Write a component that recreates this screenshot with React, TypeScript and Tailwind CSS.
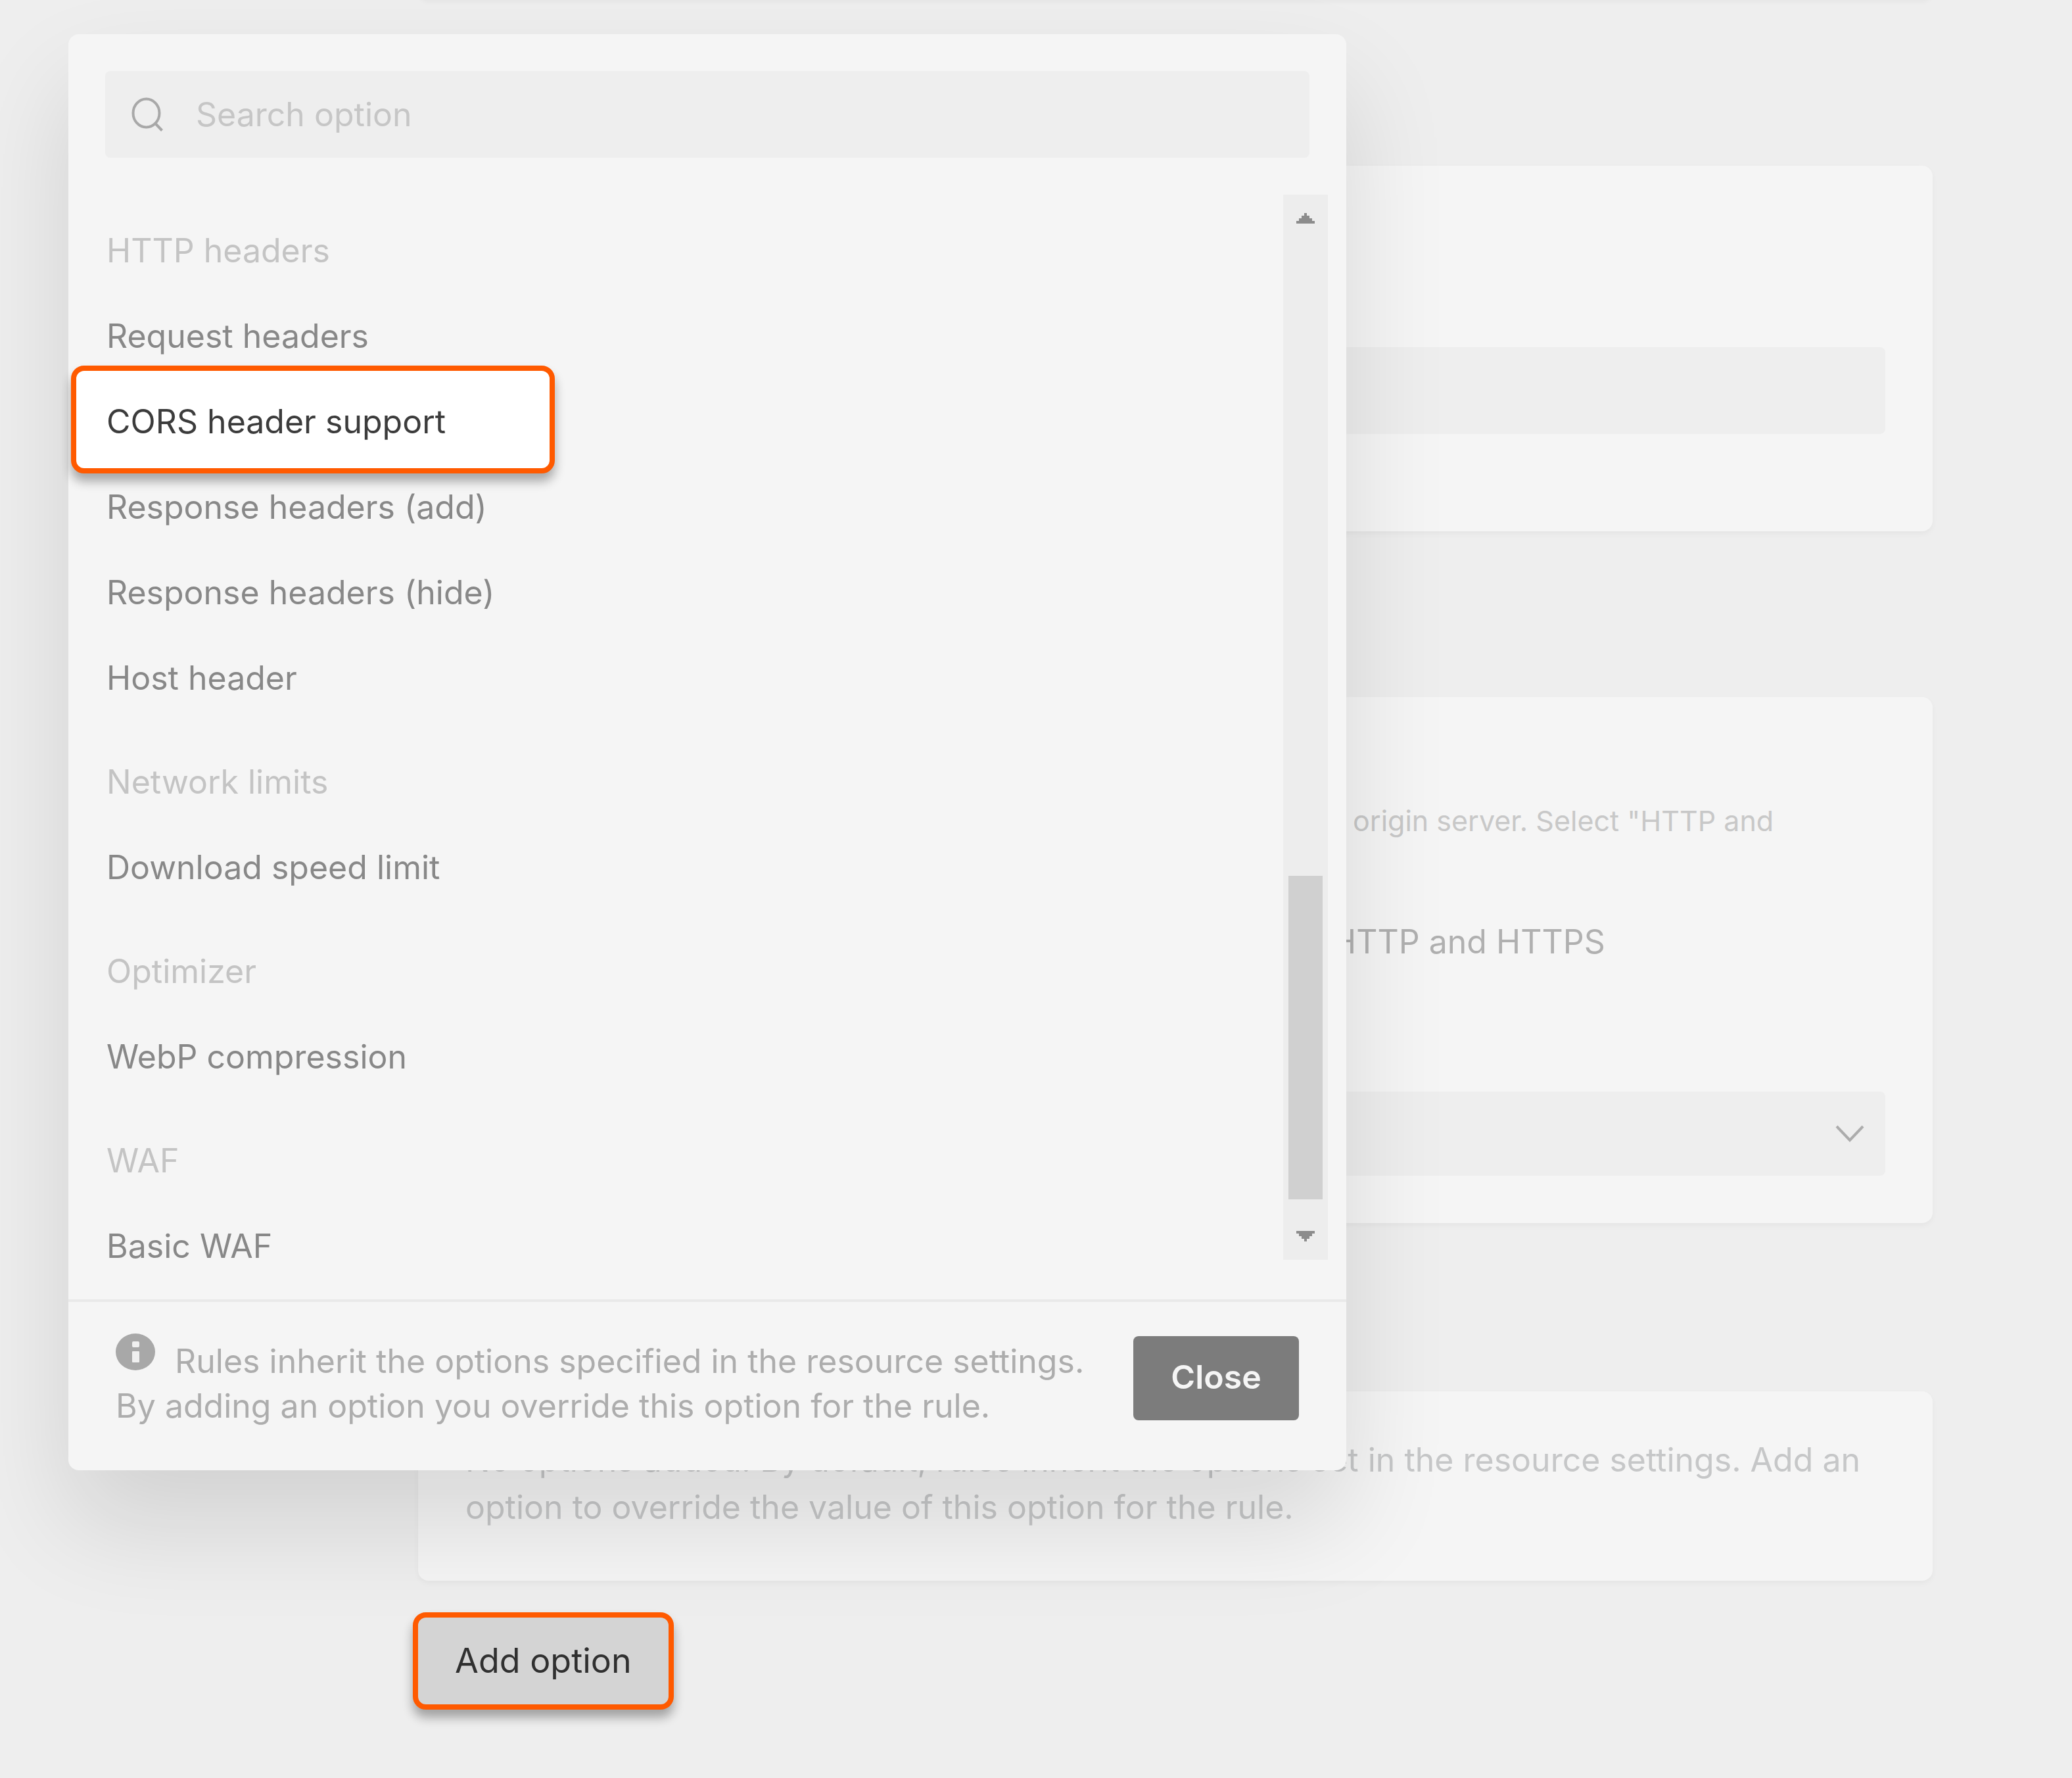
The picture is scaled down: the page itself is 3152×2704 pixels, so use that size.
import React from "react";

type Option = { label: string; highlighted?: boolean };
type Group = { title: string; options: Option[] };

const groups: Group[] = [
  {
    title: "HTTP headers",
    options: [
      { label: "Request headers" },
      { label: "CORS header support", highlighted: true },
      { label: "Response headers (add)" },
      { label: "Response headers (hide)" },
      { label: "Host header" },
    ],
  },
  { title: "Network limits", options: [{ label: "Download speed limit" }] },
  { title: "Optimizer", options: [{ label: "WebP compression" }] },
  { title: "WAF", options: [{ label: "Basic WAF" }] },
];

function SearchIcon() {
  return (
    <svg viewBox="0 0 48 52" className="h-[52px] w-12 shrink-0" fill="none" stroke="#a8a8a8" strokeWidth="4" aria-hidden="true">
      <ellipse cx="22.5" cy="24" rx="20" ry="21.5" />
      <path d="M36.5 40 L46.5 50.5" />
    </svg>
  );
}

function InfoIcon() {
  return (
    <svg viewBox="0 0 60 56" className="-mt-2.5 mr-4 mb-1 inline-block h-14 w-15 align-baseline" aria-hidden="true">
      <ellipse cx="30" cy="28" rx="30" ry="28" fill="#a8a8a8" />
      <rect x="25" y="12" width="11" height="9" rx="2" fill="#f0f0f0" />
      <rect x="25" y="27" width="11" height="17" rx="1" fill="#f0f0f0" />
    </svg>
  );
}

function ChevronIcon() {
  return (
    <svg viewBox="0 0 44 26" className="pointer-events-none absolute top-[51px] right-8 h-[26px] w-11" fill="none" stroke="#acacac" strokeWidth="4" aria-hidden="true">
      <path d="M2 2 L22 23 L42 2" />
    </svg>
  );
}

function OptionRow({ label, highlighted }: Option) {
  if (highlighted) {
    return (
      <li className="flex h-[130px]">
        <button
          type="button"
          className="relative z-10 -mt-5 -ml-[54px] h-[164px] w-[736px] shrink-0 rounded-[20px] border-8 border-[#ff5a00] bg-white pt-1.5 pl-[46px] text-left text-[#3c3c3c] shadow-[0_12px_16px_rgba(0,0,0,0.32)]"
        >
          {label}
        </button>
      </li>
    );
  }
  return (
    <li className="flex h-[130px]">
      <button type="button" className="text-left text-[#888888]">
        {label}
      </button>
    </li>
  );
}

function Scrollbar() {
  return (
    <div className="mr-7 flex h-[1620px] w-17 shrink-0 flex-col items-center bg-[#ededed]">
      <button type="button" aria-label="Scroll up" className="flex h-18 w-full items-center justify-center">
        <svg viewBox="0 0 28 16" className="h-4 w-7" fill="#8c8c8c" shapeRendering="crispEdges" aria-hidden="true">
          <path d="M12 0h4v4h4v4h4v4h4v4H0v-4h4V8h4V4h4z" />
        </svg>
      </button>
      <div className="grow-[241]" />
      <div className="h-[492px] w-[52px] bg-[#d0d0d0]" />
      <div className="grow-[5]" />
      <button type="button" aria-label="Scroll down" className="flex h-18 w-full items-center justify-center">
        <svg viewBox="0 0 28 16" className="h-4 w-7" fill="#8c8c8c" shapeRendering="crispEdges" aria-hidden="true">
          <path d="M0 0h28v4h-4v4h-4v4h-4v4h-4v-4H8V8H4V4H0z" />
        </svg>
      </button>
    </div>
  );
}

function OptionPicker() {
  return (
    <div
      role="dialog"
      aria-label="Add option"
      className="absolute top-13 left-26 w-[1944px] rounded-2xl bg-[#f5f5f5] pt-14 shadow-[0_80px_160px_rgba(0,0,0,0.12)]"
    >
      <label className="mx-14 flex h-33 items-center rounded-lg bg-[#eeeeee] pl-10">
        <SearchIcon />
        <input
          type="search"
          aria-label="Search option"
          placeholder="Search option"
          className="ml-[50px] min-w-0 flex-1 bg-transparent outline-none placeholder:text-[#c6c6c6]"
        />
      </label>

      <div className="mt-14 mb-4 flex items-start">
        <div className="flex flex-1 flex-col gap-7 pt-5 pl-[58px]">
          {groups.map((group) => (
            <section key={group.title}>
              <h3 className="flex h-[130px] items-center text-[#c4c4c4]">{group.title}</h3>
              <ul>
                {group.options.map((option) => (
                  <OptionRow key={option.label} {...option} />
                ))}
              </ul>
            </section>
          ))}
        </div>
        <Scrollbar />
      </div>

      <footer className="flex items-start justify-between border-t-4 border-[#e9e9e9] px-18 pt-13 pb-16">
        <p className="pt-1 leading-[68px] text-[#adadad]">
          <InfoIcon /> Rules inherit the options specified in the resource settings.
          <br />
          By adding an option you override this option for the rule.
        </p>
        <button type="button" className="h-32 w-63 shrink-0 rounded-lg bg-[#7c7c7c] pb-1 font-semibold text-[#f5f5f5]">
          Close
        </button>
      </footer>
    </div>
  );
}

export default function App() {
  return (
    <div className="relative min-h-screen overflow-hidden bg-[#eeeeee] font-['Inter',sans-serif] text-[50px] leading-[68px]">
      <main className="mr-53 ml-[636px]">
        <div className="-mt-4 h-4 rounded-b-2xl bg-[#f5f5f5] shadow-[0_4px_6px_rgba(0,0,0,0.03)]" />

        <section className="mt-63 rounded-2xl bg-[#f5f5f5] px-18 pt-69 pb-37 shadow-[0_4px_8px_rgba(0,0,0,0.04)]">
          <input type="text" aria-label="Rule value" className="block h-33 w-full rounded-lg bg-[#eeeeee] px-10 outline-none" />
        </section>

        <section className="mt-63 rounded-2xl bg-[#f5f5f5] px-18 pt-40 pb-18 shadow-[0_4px_8px_rgba(0,0,0,0.04)]">
          <p className="pl-[1350px] text-[43px] leading-[56px] whitespace-nowrap text-[#c8c8c8]">origin server. Select "HTTP and</p>
          <label className="mt-[122px] flex items-center pl-[1250px] whitespace-nowrap text-[#b0b0b0]">
            <input type="radio" name="protocol" className="mr-9 size-8" />
            HTTP and HTTPS
          </label>
          <div className="relative mt-[194px]">
            <select aria-label="Origin pull protocol" className="block h-32 w-full appearance-none rounded-lg bg-[#eeeeee] px-10 outline-none">
              <option />
            </select>
            <ChevronIcon />
          </div>
        </section>

        <section className="mt-64 rounded-2xl bg-[#f5f5f5] px-18 py-18 shadow-[0_4px_8px_rgba(0,0,0,0.04)]">
          <p className="-mt-1 mb-1 leading-[72px] text-[#c6c7c8]">
            No options added. By default, rules inherit the options set in the resource settings. Add an option to override
            the value of this option for the rule.
          </p>
        </section>

        <button
          type="button"
          className="relative z-10 mt-12 -ml-2 h-37 rounded-[20px] border-8 border-[#ff5a00] bg-[#d4d4d4] px-14 text-[52px] text-[#303030] shadow-[0_12px_16px_rgba(0,0,0,0.32)]"
        >
          Add option
        </button>
      </main>

      <OptionPicker />
    </div>
  );
}
